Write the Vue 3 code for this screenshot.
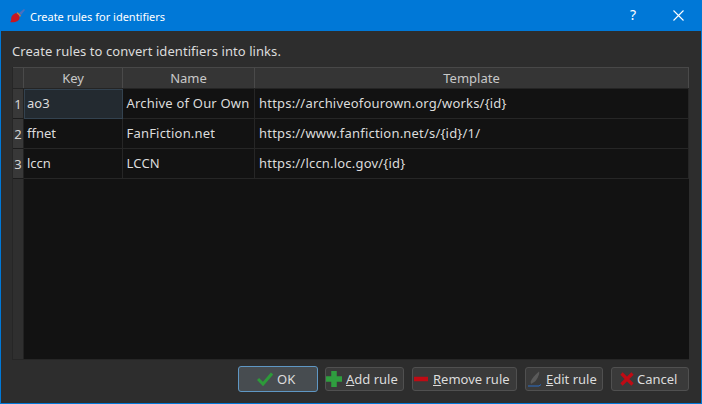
<script setup>
const rows = [
  ['ao3', 'Archive of Our Own', 'https://archiveofourown.org/works/{id}'],
  ['ffnet', 'FanFiction.net', 'https://www.fanfiction.net/s/{id}/1/'],
  ['lccn', 'LCCN', 'https://lccn.loc.gov/{id}'],
]
</script>

<template>
  <div class="win">
    <div class="titlebar">
      <svg class="appicon" width="16" height="16" viewBox="0 0 16 16">
        <path d="M10 5 L15 1 L16 2 L12 7Z" fill="#4a6fc0"/>
        <path d="M8.5 4 L12 7.5 L11 9 L7.5 5.5Z" fill="#c9803a"/>
        <path d="M7 5 C9.5 6.5 11 8.5 10.5 10.5 C10 13 6 15 1 14 C2.5 13 2 11.5 2.2 10 C2.5 7.5 5 5.5 7 5Z" fill="#c81620"/>
      </svg>
      <span class="title">Create rules for identifiers</span>
      <span class="help">?</span>
      <svg class="close" width="11" height="11" viewBox="0 0 11 11"><path d="M0.5 0.5 L10.5 10.5 M10.5 0.5 L0.5 10.5" stroke="#fff" stroke-width="1.1"/></svg>
    </div>
    <div class="body">
      <div class="intro">Create rules to convert identifiers into links.</div>
      <div class="table">
        <div class="head">
          <div class="corner"></div>
          <div class="hc key">Key</div>
          <div class="hc name">Name</div>
          <div class="hc tpl">Template</div>
        </div>
        <div class="main">
          <div v-for="(r, i) in rows" :key="i" class="row">
            <div class="rh">{{ i + 1 }}</div>
            <div class="c key" :class="{ current: i === 0 }">{{ r[0] }}</div>
            <div class="c name">{{ r[1] }}</div>
            <div class="c tpl">{{ r[2] }}</div>
          </div>
          <div class="rest"><div class="rest-rh"></div></div>
        </div>
      </div>
      <div class="buttons">
        <button class="btn ok">
          <svg width="16" height="14" viewBox="0 0 16 14"><path d="M1 7 L6 12 L15 1.5" fill="none" stroke="#2d9a3a" stroke-width="3"/></svg>
          <span>OK</span>
        </button>
        <button class="btn add">
          <svg width="16" height="16" viewBox="0 0 16 16"><path d="M5.25 0h5.5v5.25H16v5.5h-5.25V16h-5.5V10.75H0v-5.5h5.25Z" fill="#2f9e3f"/></svg>
          <span><u>A</u>dd rule</span>
        </button>
        <button class="btn remove">
          <svg width="14" height="16" viewBox="0 0 14 16"><rect x="0" y="5.75" width="14" height="4.5" fill="#c00b14"/></svg>
          <span><u>R</u>emove rule</span>
        </button>
        <button class="btn edit">
          <svg width="13" height="16" viewBox="0 0 13 16">
            <path d="M11 0.5 C12 2 10 7 7 10.5 L3 13 C2 11 3 9.5 4 8 C6 5 9 2 11 0.5Z" fill="#5a5a5a"/>
            <path d="M0 15 H11 L13 13.5" fill="none" stroke="#2b6cc4" stroke-width="1"/>
          </svg>
          <span><u>E</u>dit rule</span>
        </button>
        <button class="btn cancel">
          <svg width="14" height="14" viewBox="0 0 14 14"><path d="M1.5 1.5 L12.5 12.5 M12.5 1.5 L1.5 12.5" stroke="#c00b14" stroke-width="3.2"/></svg>
          <span>Cancel</span>
        </button>
      </div>
    </div>
  </div>
</template>

<style>
html, body { margin: 0; padding: 0; background: #2d2d2d; }
</style>

<style scoped>
.win {
  width: 702px;
  height: 404px;
  box-sizing: border-box;
  border: 1px solid #0078d7;
  display: flex;
  flex-direction: column;
  font-family: "Noto Sans", sans-serif;
  font-size: 13px;
  color: #dcdcdc;
  overflow: hidden;
}
.titlebar {
  height: 30px;
  box-sizing: border-box;
  background: #0078d7;
  display: flex;
  align-items: center;
  color: #fff;
  font-size: 11px;
  flex: none;
}
.appicon { margin-left: 8px; }
.title { margin-left: 5px; flex: 1; }
.help { font-size: 14px; margin-right: 37px; margin-bottom: 3px; }
.close { margin-right: 17px; margin-bottom: 1px; }
.body {
  flex: 1;
  background: #2d2d2d;
  padding: 0 12px 0 11px;
  display: flex;
  flex-direction: column;
  min-height: 0;
}
.intro { height: 36px; line-height: 40px; flex: none; letter-spacing: 0.06px; }
.table {
  flex: none;
  height: 293px;
  box-sizing: border-box;
  border-left: 1px solid #262626;
  border-bottom: 1px solid #262626;
  display: flex;
  flex-direction: column;
}
.head {
  height: 22px;
  flex: none;
  display: flex;
  background: #353535;
  border-top: 1px solid #484848;
  border-bottom: 1px solid #242424;
  box-sizing: border-box;
  color: #c8c8c8;
}
.corner { width: 11px; flex: none; border-right: 1px solid #4a4a4a; box-sizing: border-box; }
.hc {
  text-align: center;
  line-height: 21px;
  border-right: 1px solid #4a4a4a;
  box-sizing: border-box;
}
.key { width: 99px; flex: none; box-sizing: border-box; }
.name { width: 132px; flex: none; box-sizing: border-box; }
.tpl { width: 434px; flex: none; box-sizing: border-box; }
.main { flex: 1; background: #121212; display: flex; flex-direction: column; }
.row { height: 30px; flex: none; display: flex; }
.rh {
  width: 11px;
  flex: none;
  background: #383838;
  border-bottom: 1px solid #1c1c1c;
  border-right: 1px solid #222;
  box-sizing: border-box;
  text-align: center;
  line-height: 30px;
  color: #d4d4d4;
}
.c {
  line-height: 29px;
  padding-left: 3px;
  border-right: 1px solid #262626;
  border-bottom: 1px solid #262626;
  color: #dcdcdc;
}
.c.name { letter-spacing: 0.2px; padding-left: 3.5px; }
.c.tpl { letter-spacing: 0.2px; padding-left: 4px; }
.c.current {
  background: #232a30;
  border: 1px solid #33424f;
  line-height: 27px;
  padding-left: 2px;
}
.rest { flex: 1; display: flex; }
.rest-rh { width: 11px; background: #2f2f2f; border-right: 1px solid #222; box-sizing: border-box; }
.buttons {
  flex: none;
  height: 43px;
  display: flex;
  justify-content: flex-end;
  align-items: flex-start;
  padding-top: 6px;
  box-sizing: border-box;
}
.btn {
  height: 24px;
  margin-top: 1px;
  box-sizing: border-box;
  background: #3a3a3a;
  border: 1px solid #505050;
  border-radius: 3px;
  color: #dcdcdc;
  font: inherit;
  padding: 0;
  display: flex;
  align-items: center;
  justify-content: flex-start;
}
.ok { width: 80px; height: 26px; margin-top: 0; background: #474c50; border-color: #5f97c4; padding-left: 18px; gap: 4px; }
.add { width: 79px; margin-left: 7px; gap: 4px; }
.remove { width: 105px; margin-left: 8px; padding-left: 1px; gap: 5px; }
.edit { width: 78px; margin-left: 8px; padding-left: 2px; gap: 5px; }
.cancel { width: 78px; margin-left: 8px; padding-left: 8px; gap: 3px; }
</style>
